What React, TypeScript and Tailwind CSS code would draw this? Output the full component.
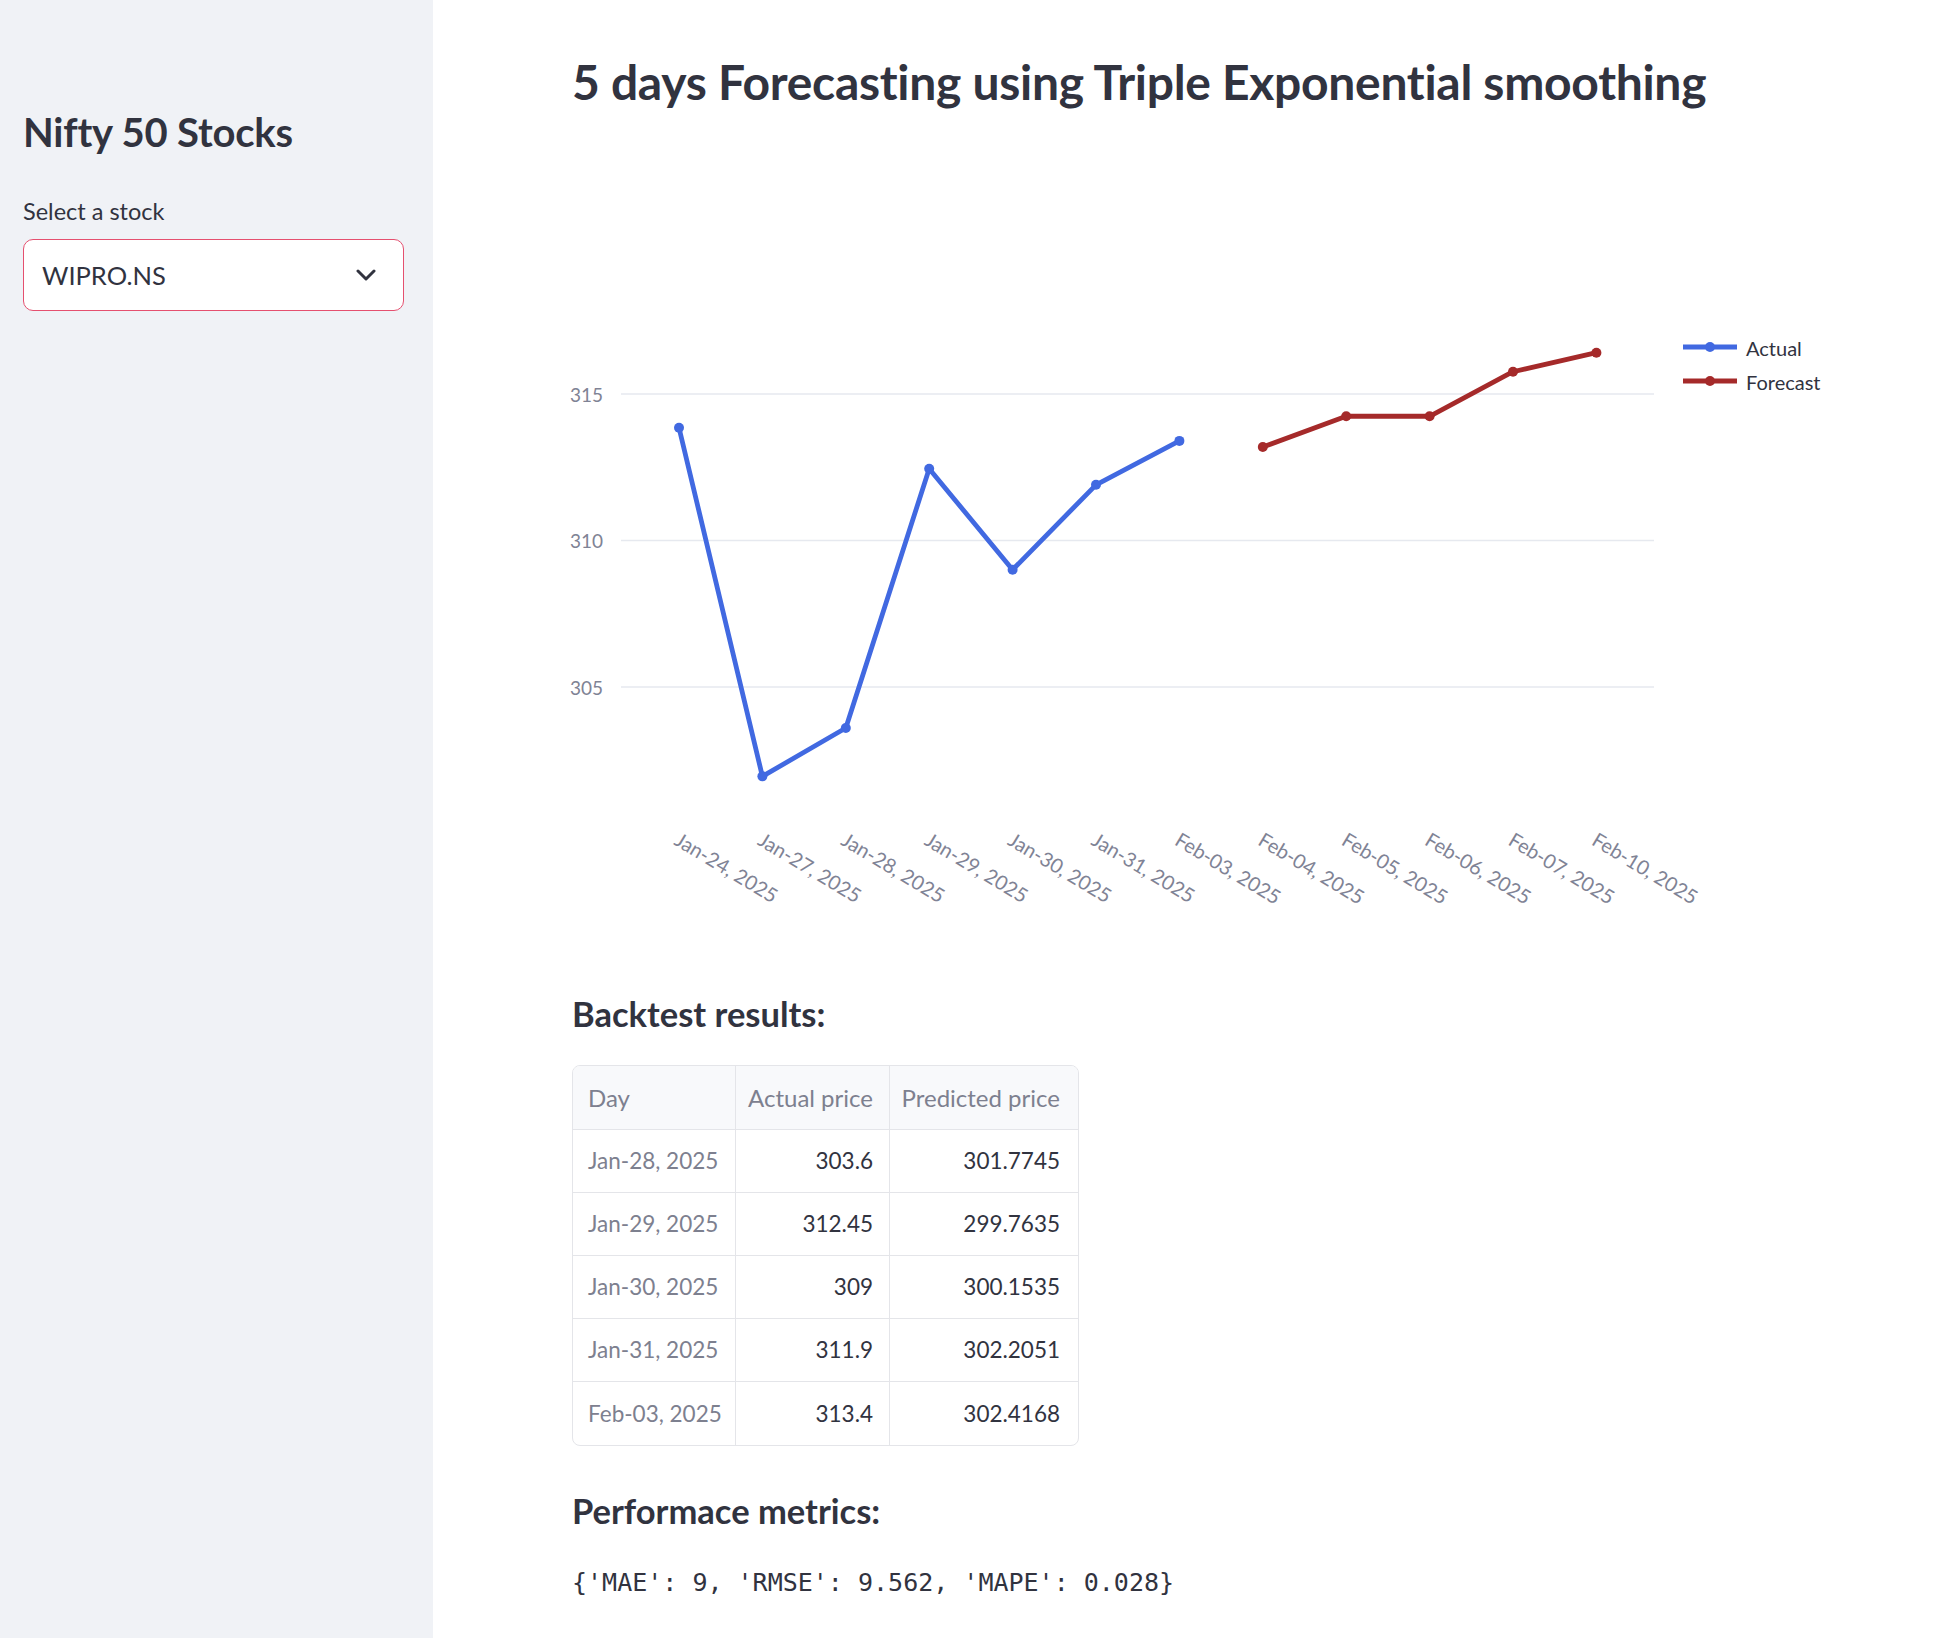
import React from "react";

const labels = [
  "Jan-24, 2025",
  "Jan-27, 2025",
  "Jan-28, 2025",
  "Jan-29, 2025",
  "Jan-30, 2025",
  "Jan-31, 2025",
  "Feb-03, 2025",
  "Feb-04, 2025",
  "Feb-05, 2025",
  "Feb-06, 2025",
  "Feb-07, 2025",
  "Feb-10, 2025",
];
const actual = [313.85, 301.95, 303.6, 312.45, 309, 311.9, 313.4];
const forecast = [313.19, 314.24, 314.24, 315.76, 316.41];

const OX = 20;
const X = (i: number) => OX + 107 + i * 83.4;
const Y = (v: number) => 154 + (315 - v) * 29.3;

const rows = [
  ["Jan-28, 2025", "303.6", "301.7745"],
  ["Jan-29, 2025", "312.45", "299.7635"],
  ["Jan-30, 2025", "309", "300.1535"],
  ["Jan-31, 2025", "311.9", "302.2051"],
  ["Feb-03, 2025", "313.4", "302.4168"],
];

function Chart() {
  const aPts = actual.map((v, i) => `${X(i)},${Y(v)}`).join(" ");
  const fPts = forecast.map((v, i) => `${X(i + 7)},${Y(v)}`).join(" ");
  return (
    <svg width={1320} height={700} className="block" style={{ fontFamily: "Lato, sans-serif" }}>
      {[315, 310, 305].map((v) => (
        <g key={v}>
          <line x1={OX + 49} x2={OX + 1082} y1={Y(v)} y2={Y(v)} stroke="#e6e9ef" strokeWidth={1.5} />
          <text x={OX + 31} y={Y(v)} textAnchor="end" dominantBaseline="central" fontSize={19} fill="#7f8395">
            {v}
          </text>
        </g>
      ))}
      <polyline points={aPts} fill="none" stroke="#4169e1" strokeWidth={4.8} strokeLinejoin="round" />
      {actual.map((v, i) => (
        <circle key={i} cx={X(i)} cy={Y(v)} r={5} fill="#4169e1" />
      ))}
      <polyline points={fPts} fill="none" stroke="#a52a2a" strokeWidth={4.8} strokeLinejoin="round" />
      {forecast.map((v, i) => (
        <circle key={i} cx={X(i + 7)} cy={Y(v)} r={5} fill="#a52a2a" />
      ))}
      {labels.map((l, i) => {
        const ax = X(i) - 6;
        const ay = 604;
        return (
          <text key={l} x={ax} y={ay} fontSize={20} fill="#7f8395" transform={`rotate(31 ${ax} ${ay})`}>
            {l}
          </text>
        );
      })}
      <line x1={OX + 1111} x2={OX + 1165} y1={107} y2={107} stroke="#4169e1" strokeWidth={5} />
      <circle cx={OX + 1138} cy={107} r={5} fill="#4169e1" />
      <text x={OX + 1174} y={108} dominantBaseline="central" fontSize={20} fill="#31333f">
        Actual
      </text>
      <line x1={OX + 1111} x2={OX + 1165} y1={141} y2={141} stroke="#a52a2a" strokeWidth={5} />
      <circle cx={OX + 1138} cy={141} r={5} fill="#a52a2a" />
      <text x={OX + 1174} y={142} dominantBaseline="central" fontSize={20} fill="#31333f">
        Forecast
      </text>
    </svg>
  );
}

export default function App() {
  return (
    <div className="flex min-h-[1638px] w-full bg-white text-[#31333f]" style={{ fontFamily: "Lato, 'Noto Sans', sans-serif" }}>
      <aside className="w-[433px] shrink-0 bg-[#f0f2f6] px-[23px]">
        <h2 className="mt-[107px] text-[40px] font-bold leading-[50px] tracking-[-0.2px]">Nifty 50 Stocks</h2>
        <div className="mt-[39.5px] text-[23.5px] leading-[28px]">Select a stock</div>
        <div className="mt-[14.5px] flex h-[72px] w-[381px] items-center justify-between rounded-[10px] border border-[#e5506f] bg-white pl-[18px] pr-[27px]">
          <span className="text-[25.5px] leading-[32px]">WIPRO.NS</span>
          <svg width="20" height="12" viewBox="0 0 20 12" className="block">
            <polyline points="2,2 10,10 18,2" fill="none" stroke="#31333f" strokeWidth="3" strokeLinecap="round" strokeLinejoin="round" />
          </svg>
        </div>
      </aside>
      <main className="flex-1 pl-[139px]">
        <h1 className="mt-[53px] text-[48px] font-bold leading-[58px] tracking-[-0.3px]">
          5 days Forecasting using Triple Exponential smoothing
        </h1>
        <div className="mt-[129px] -ml-[20px]">
          <Chart />
        </div>
        <h3 className="mt-[54px] text-[34.5px] font-bold leading-[40px]">Backtest results:</h3>
        <div className="mt-[31px] w-[507px] overflow-hidden rounded-[8px] border border-[#e4e5e9] text-[22.5px]">
          <div className="flex h-[64px] border-b border-[#e4e5e9] bg-[#f8f9fb] text-[24px] text-[#7d808f]">
            <div className="flex w-[163px] items-center border-r border-[#e4e5e9] pl-[15px]">Day</div>
            <div className="flex w-[154px] items-center justify-end border-r border-[#e4e5e9] pr-[16px]">Actual price</div>
            <div className="flex flex-1 items-center justify-end pr-[18px]">Predicted price</div>
          </div>
          {rows.map((r, idx) => (
            <div key={r[0]} className={`flex h-[63px] ${idx < rows.length - 1 ? "border-b border-[#e4e5e9]" : ""}`}>
              <div className="flex w-[163px] items-center border-r border-[#e4e5e9] pl-[15px] text-[#7d808f]">{r[0]}</div>
              <div className="flex w-[154px] items-center justify-end border-r border-[#e4e5e9] pr-[16px]">{r[1]}</div>
              <div className="flex flex-1 items-center justify-end pr-[18px]">{r[2]}</div>
            </div>
          ))}
        </div>
        <h3 className="mt-[45px] text-[34.5px] font-bold leading-[40px]">Performace metrics:</h3>
        <pre className="mt-[37px] text-[25px] leading-[30px]" style={{ fontFamily: "'DejaVu Sans Mono', 'Liberation Mono', monospace" }}>
          {"{'MAE': 9, 'RMSE': 9.562, 'MAPE': 0.028}"}
        </pre>
      </main>
    </div>
  );
}
